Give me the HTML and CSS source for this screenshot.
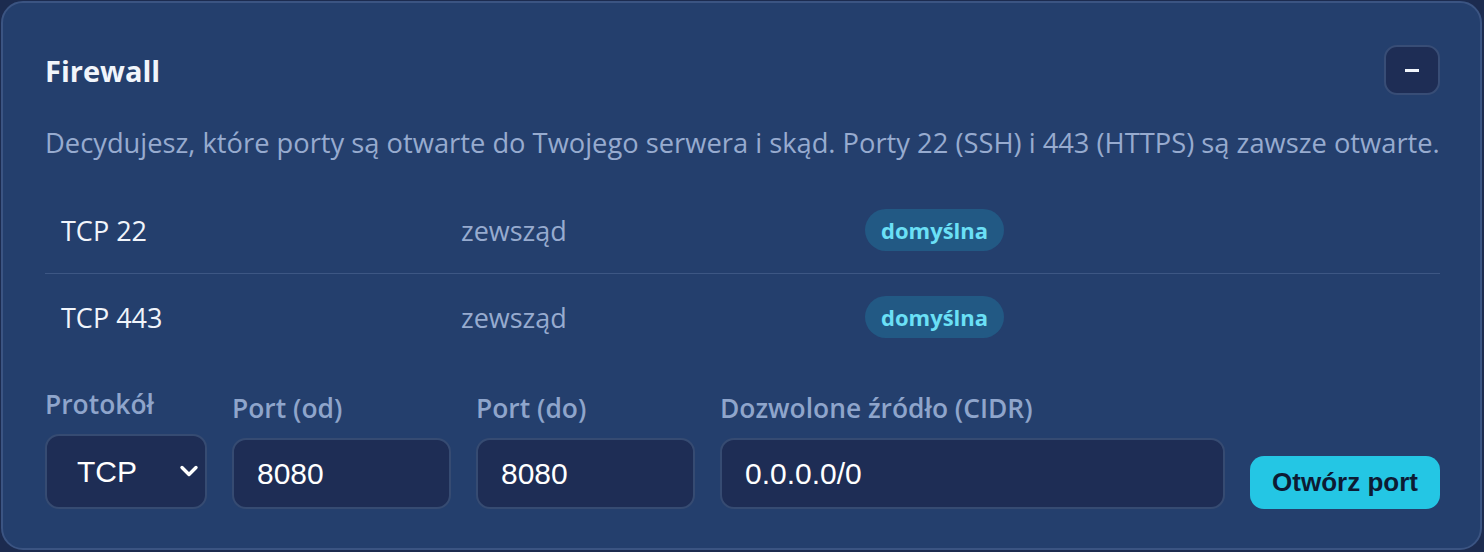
FILE: index.html
```html
<!DOCTYPE html>
<html lang="pl">
<head>
    <meta charset="UTF-8">
    <meta name="viewport" content="width=device-width, initial-scale=1.0">
    <title>Firewall</title>
    <link rel="stylesheet" href="styles.css">
</head>
<body>
    <div class="card">
        <div class="card-header">
            <h2 class="card-title">Firewall</h2>
            <button type="button" class="collapse-btn"><span class="minus"></span></button>
        </div>
        <p class="card-desc">Decydujesz, które porty są otwarte do Twojego serwera i skąd. Porty 22 (SSH) i 443 (HTTPS) są zawsze otwarte.</p>

        <div class="rule-list">
            <div class="rule-row">
                <span class="rule-port">TCP 22</span>
                <span class="rule-source">zewsząd</span>
                <span><span class="badge">domyślna</span></span>
            </div>
            <div class="rule-row">
                <span class="rule-port">TCP 443</span>
                <span class="rule-source">zewsząd</span>
                <span><span class="badge">domyślna</span></span>
            </div>
        </div>

        <form class="rule-form">
            <div class="field field-proto">
                <label for="proto">Protokół</label>
                <div class="select-wrap">
                    <select id="proto">
                        <option>TCP</option>
                        <option>UDP</option>
                    </select>
                    <svg class="select-arrow" width="20" height="14" viewBox="0 0 20 14"><path d="M3 3.5l7 7 7-7" fill="none" stroke="#fff" stroke-width="3.4" stroke-linecap="round" stroke-linejoin="round"/></svg>
                </div>
            </div>
            <div class="field field-port">
                <label for="portFrom">Port (od)</label>
                <input type="text" id="portFrom" value="8080">
            </div>
            <div class="field field-port">
                <label for="portTo">Port (do)</label>
                <input type="text" id="portTo" value="8080">
            </div>
            <div class="field field-cidr">
                <label for="cidr">Dozwolone źródło (CIDR)</label>
                <input type="text" id="cidr" value="0.0.0.0/0">
            </div>
            <button type="submit" class="open-btn">Otwórz port</button>
        </form>
    </div>
</body>
</html>
```

FILE: styles.css
```css
* {
    margin: 0;
    padding: 0;
    box-sizing: border-box;
}
body {
    background-color: #1c2b4f;
    font-family: 'Open Sans', 'Noto Sans', sans-serif;
    padding: 1px 2px 2px 1px;
}
.card {
    background-color: #243f6d;
    border: 2px solid #3b5482;
    border-radius: 22px;
    padding: 42px 40px 39px 42px;
}
.card-header {
    display: flex;
    align-items: center;
    justify-content: space-between;
}
.card-title {
    font-size: 29px;
    font-weight: 700;
    color: #f1f5fb;
}
.collapse-btn {
    display: flex;
    align-items: center;
    justify-content: center;
    width: 56px;
    height: 50px;
    background-color: #1e2d55;
    border: 2px solid #384d76;
    border-radius: 13px;
    cursor: pointer;
}
.minus {
    width: 14px;
    height: 3px;
    background-color: #f1f5fb;
}
.card-desc {
    margin-top: 27px;
    font-size: 27.3px;
    line-height: 42px;
    color: #97abcf;
    white-space: nowrap;
}
.rule-list {
    margin-top: 23px;
}
.rule-row {
    display: grid;
    grid-template-columns: 400px 404px 1fr;
    align-items: center;
    padding: 22px 16px;
    font-size: 27px;
}
.rule-row + .rule-row {
    border-top: 1px solid #3d5784;
}
.rule-port {
    color: #f1f5fb;
}
.rule-source {
    color: #97abcf;
}
.badge {
    display: inline-block;
    height: 42px;
    line-height: 42px;
    padding: 0 16px;
    border-radius: 21px;
    background-color: #225984;
    color: #6be0f6;
    font-size: 22px;
    font-weight: 700;
}
.rule-form {
    display: flex;
    align-items: flex-end;
    gap: 25px;
    margin-top: 26px;
}
.field label {
    display: block;
    font-size: 26.4px;
    font-weight: 600;
    line-height: 36px;
    color: #8fa5cb;
    margin-bottom: 12px;
    white-space: nowrap;
}
.field input,
.field select {
    display: block;
    width: 100%;
    height: 71px;
    background-color: #1e2d55;
    border: 2px solid #364b72;
    border-radius: 14px;
    color: #fff;
    font-family: 'Liberation Sans', Arial, sans-serif;
    font-size: 30px;
    padding: 0 23px;
    outline: none;
}
.field-proto {
    width: 162px;
}
.field-port {
    width: 219px;
}
.field-cidr {
    width: 505px;
}
.select-wrap {
    position: relative;
}
.field select {
    height: 75px;
    padding-left: 30px;
    appearance: none;
    -webkit-appearance: none;
}
.select-arrow {
    position: absolute;
    right: 8px;
    top: 30px;
    pointer-events: none;
}
.open-btn {
    width: 190px;
    height: 53px;
    background-color: #24c6e4;
    border: none;
    border-radius: 14px;
    color: #0d1b34;
    font-family: 'Liberation Sans', Arial, sans-serif;
    font-size: 26px;
    font-weight: 700;
    cursor: pointer;
}
```
